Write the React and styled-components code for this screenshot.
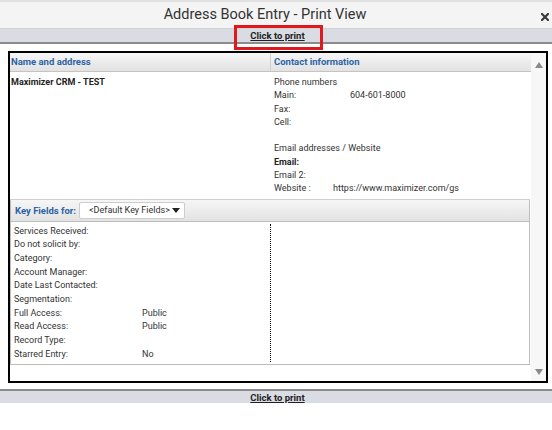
import React from 'react';
import styled, { createGlobalStyle, css } from 'styled-components';

const Global = createGlobalStyle`
  html, body { margin: 0; padding: 0; background: #fff; }
  body { font-family: Roboto, "Liberation Sans", Arial, sans-serif; color: #333; }
  * { box-sizing: border-box; }
`;

const Page = styled.div`
  width: 552px;
  height: 430px;
  display: flex;
  flex-direction: column;
  overflow: hidden;
`;

const TopEdge = styled.div`
  flex: none;
  height: 2px;
  background: #e2e2e2;
`;

const TitleBar = styled.div`
  flex: none;
  height: 27px;
  background: #f4f4f4;
  border-bottom: 1px solid #d2d2d2;
  display: grid;
  grid-template-columns: 1fr auto 1fr;
  align-items: center;
  padding-left: 0;
`;

const Title = styled.div`
  grid-column: 2;
  font-size: 14.5px;
  color: #333;
  padding-bottom: 2px;
  margin-right: 22px;
`;

const Close = styled.button`
  grid-column: 3;
  justify-self: end;
  margin: 4px 2px 0 0;
  padding: 0;
  border: 0;
  background: none;
  width: 10px;
  height: 10px;
  display: flex;
  align-items: center;
  justify-content: center;
`;

const PrintBar = styled.div`
  flex: none;
  height: ${p => (p.$bottom ? '14px' : '15px')};
  background: #d9dde3;
  ${p => (p.$bottom ? css`border-top: 2px solid #8c8c8c;` : css`border-bottom: 2px solid #8c8c8c;`)}
  display: flex;
  justify-content: center;
  align-items: center;
`;

const PrintLink = styled.a`
  position: relative;
  font-size: 9.5px;
  font-weight: 700;
  color: #222;
  text-decoration: underline;
  line-height: 11px;
  margin-left: 3px;
  ${p =>
    p.$highlight &&
    css`
      &::after {
        content: '';
        position: absolute;
        left: -16px;
        right: -18px;
        top: -5px;
        bottom: -9px;
        border: 3px solid #e2191c;
      }
    `}
`;

const Frame = styled.div`
  flex: none;
  margin: 7px 4px 0 8px;
  height: 332px;
  border: 2px solid #000;
  display: flex;
`;

const Content = styled.div`
  flex: 1;
  display: flex;
  flex-direction: column;
  min-width: 0;
`;

const Scroller = styled.div`
  flex: none;
  width: 15px;
  background: #f7f7f7;
  display: flex;
  flex-direction: column;
  justify-content: space-between;
  align-items: center;
  padding: 9px 0 6px;
`;

const Arrow = styled.div`
  width: 0;
  height: 0;
  border-left: 4.5px solid transparent;
  border-right: 4.5px solid transparent;
  ${p =>
    p.$down
      ? css`border-top: 6px solid #8a8a8a;`
      : css`border-bottom: 6px solid #8a8a8a;`}
`;

const HeaderRow = styled.div`
  display: grid;
  grid-template-columns: 260px 1fr;
  height: 19px;
  background: linear-gradient(#f6f6f6, #e2e2e2);
  border-bottom: 1px solid #c4c4c4;
`;

const HeaderCell = styled.div`
  font-size: 9.5px;
  font-weight: 700;
  color: #2d64a5;
  display: flex;
  align-items: center;
  padding-left: ${p => (p.$divider ? '3px' : '1px')};
  padding-bottom: 1px;
  ${p => p.$divider && css`border-left: 1px solid #d0d0d0;`}
`;

const Columns = styled.div`
  display: grid;
  grid-template-columns: 260px 1fr;
  padding-top: 4px;
`;

const Text = styled.div`
  font-size: 9px;
  line-height: 13.3px;
  height: 13.3px;
  white-space: nowrap;
  color: ${p => (p.$strong ? '#222' : '#333')};
  font-weight: ${p => (p.$strong ? 700 : 400)};
`;

const NameCol = styled.div`
  padding-left: 1px;
`;

const InfoCol = styled.div`
  padding-left: 4px;
  display: flex;
  flex-direction: column;
`;

const Pair = styled.div`
  display: grid;
  grid-template-columns: ${p => p.$label}px 1fr;
`;

const Gap = styled.div`
  height: 13.3px;
`;

const KeyBox = styled.div`
  margin: 3px 1px 0 0;
  border: 1px solid #bdbdbd;
  border-top-color: #d0d0d0;
  display: flex;
  flex-direction: column;
`;

const KeyHeader = styled.div`
  height: 22px;
  background: linear-gradient(#f6f6f6, #e2e2e2);
  border-bottom: 1px solid #bdbdbd;
  display: flex;
  align-items: center;
  gap: 3px;
  padding-left: 4px;
`;

const KeyLabel = styled.span`
  font-size: 9.5px;
  font-weight: 700;
  color: #2d64a5;
`;

const Select = styled.div`
  width: 106px;
  height: 17px;
  background: #fff;
  border: 1px solid #cdcdcd;
  border-radius: 2px;
  display: flex;
  align-items: center;
  justify-content: space-between;
  padding: 0 4px 0 9px;
  font-size: 9px;
  color: #333;
`;

const Caret = styled.span`
  width: 0;
  height: 0;
  border-left: 4.5px solid transparent;
  border-right: 4.5px solid transparent;
  border-top: 5px solid #222;
`;

const KeyBody = styled.div`
  display: grid;
  grid-template-columns: 260px 1fr;
  height: 142px;
  padding: 2px 0 2px;
`;

const FieldList = styled.div`
  border-right: 1px dotted #000;
  padding: 1px 0 0 3px;
`;

const Field = styled.div`
  display: grid;
  grid-template-columns: 128px 1fr;
  font-size: 9px;
  line-height: 13.7px;
  height: 13.7px;
  color: #333;
  white-space: nowrap;
`;

const BottomSpace = styled.div`
  flex: none;
  height: 6px;
`;

const phones = [
  ['Main:', '604-601-8000'],
  ['Fax:', ''],
  ['Cell:', ''],
];

const keyFields = [
  ['Services Received:', ''],
  ['Do not solicit by:', ''],
  ['Category:', ''],
  ['Account Manager:', ''],
  ['Date Last Contacted:', ''],
  ['Segmentation:', ''],
  ['Full Access:', 'Public'],
  ['Read Access:', 'Public'],
  ['Record Type:', ''],
  ['Starred Entry:', 'No'],
];

export default function App() {
  return (
    <Page>
      <Global />
      <TopEdge />
      <TitleBar>
        <Title>Address Book Entry - Print View</Title>
        <Close aria-label="Close">
          <svg width="8" height="8" viewBox="0 0 8 8">
            <path d="M1 1 L7 7 M7 1 L1 7" stroke="#3a3a3a" strokeWidth="2.2" strokeLinecap="square" />
          </svg>
        </Close>
      </TitleBar>
      <PrintBar>
        <PrintLink $highlight>Click to print</PrintLink>
      </PrintBar>
      <Frame>
        <Content>
          <HeaderRow>
            <HeaderCell>Name and address</HeaderCell>
            <HeaderCell $divider>Contact information</HeaderCell>
          </HeaderRow>
          <Columns>
            <NameCol>
              <Text $strong>Maximizer CRM - TEST</Text>
            </NameCol>
            <InfoCol>
              <Text>Phone numbers</Text>
              {phones.map(([l, v]) => (
                <Pair key={l} $label={76}>
                  <Text>{l}</Text>
                  <Text>{v}</Text>
                </Pair>
              ))}
              <Gap />
              <Text>Email addresses / Website</Text>
              <Text $strong>Email:</Text>
              <Text>Email 2:</Text>
              <Pair $label={59}>
                <Text>Website :</Text>
                <Text>https://www.maximizer.com/gs</Text>
              </Pair>
            </InfoCol>
          </Columns>
          <KeyBox>
            <KeyHeader>
              <KeyLabel>Key Fields for:</KeyLabel>
              <Select>
                <span>&lt;Default Key Fields&gt;</span>
                <Caret />
              </Select>
            </KeyHeader>
            <KeyBody>
              <FieldList>
                {keyFields.map(([l, v]) => (
                  <Field key={l}>
                    <span>{l}</span>
                    <span>{v}</span>
                  </Field>
                ))}
              </FieldList>
              <div />
            </KeyBody>
          </KeyBox>
        </Content>
        <Scroller>
          <Arrow />
          <Arrow $down />
        </Scroller>
      </Frame>
      <BottomSpace />
      <PrintBar $bottom>
        <PrintLink>Click to print</PrintLink>
      </PrintBar>
    </Page>
  );
}
